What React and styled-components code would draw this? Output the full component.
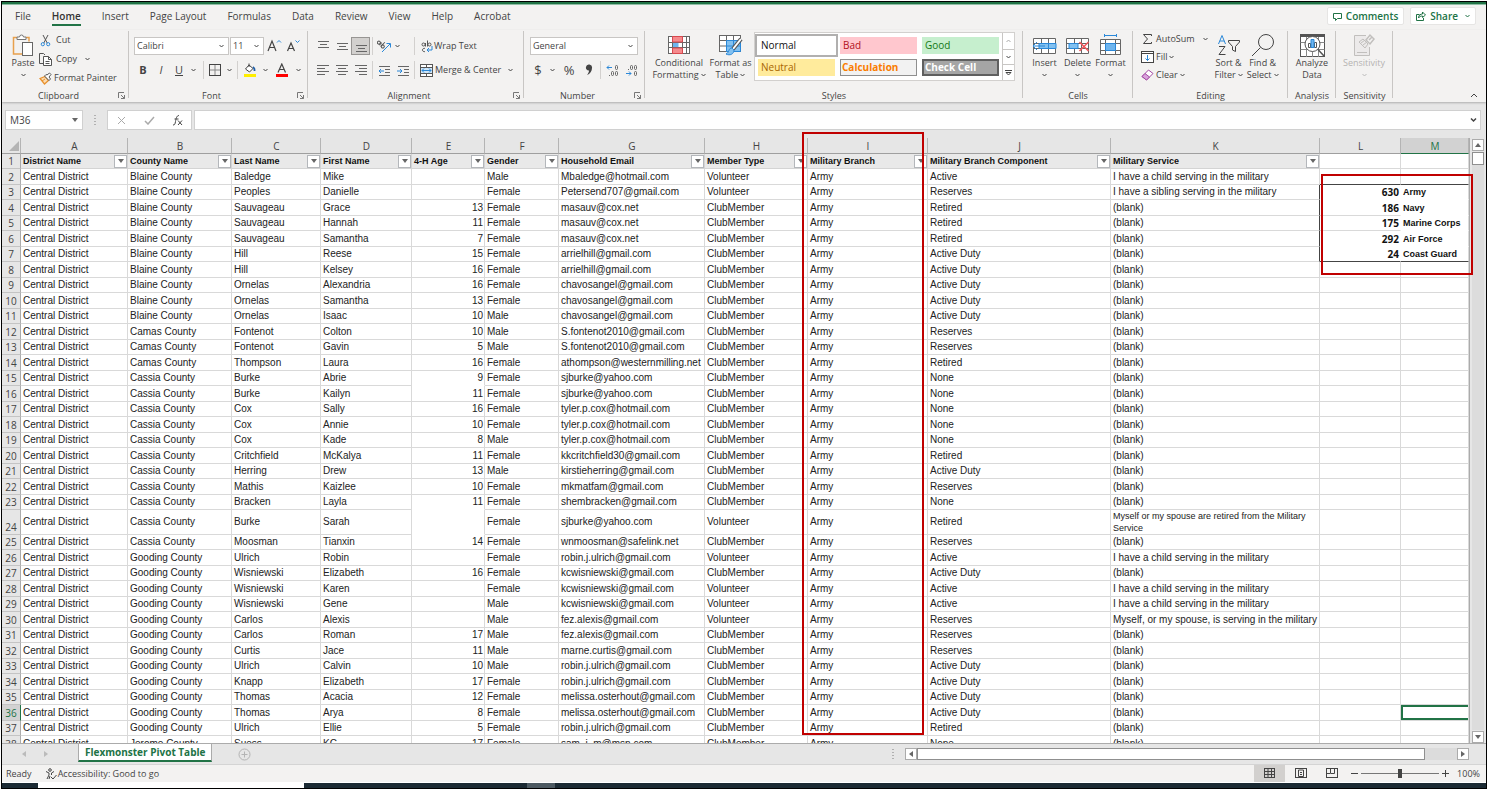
import React from "react";
import styled, { createGlobalStyle, css } from "styled-components";

const GREEN = "#217346";
const INK = "#444";
const BLUE = "#2b88d8";
const RED = "#c00000";

const GlobalStyle = createGlobalStyle`
  *, *::before, *::after { box-sizing: border-box; }
  body { margin: 0; background: #fff; color: ${INK}; font: 9px/12px "Open Sans", "Noto Sans", sans-serif; }
  button, select, input { font: inherit; color: inherit; margin: 0; padding: 0; border: 0; border-radius: 0; background: none; }
  svg { display: block; flex: none; }
`;

const Frame = styled.div`height: 100vh; padding: 1px;`;
const AppWindow = styled.div`
  height: 100%; display: flex; flex-direction: column; overflow: hidden;
  border: 1px solid #000; background: #f3f2f1;
`;
const TitleStrip = styled.div`flex: none; height: 3px; background: ${GREEN}; border-bottom: 1px solid #8fbfa5;`;

const MenuBar = styled.nav`
  flex: none; height: 25px; display: flex; align-items: center; gap: 1px;
  padding: 0 10px 3px 3px; font-size: 10px;
`;
const MenuTab = styled.button`
  height: 22px; padding: 0 10px; position: relative;
  ${p => p.$active && css`
    color: #333; font-weight: 600;
    &::after { content: ""; position: absolute; left: 10px; right: 10px; bottom: 1px; height: 2px; background: ${GREEN}; }
  `}
`;
const PillButton = styled.button`
  height: 18px; display: flex; align-items: center; gap: 4px; padding: 0 5px;
  background: #fff; border: 1px solid #e6e5e4; border-radius: 2px; color: ${GREEN}; font-weight: 600;
`;
const PillGroup = styled.div`margin-left: auto; display: flex; gap: 6px;`;

const Ribbon = styled.div`
  flex: none; height: 72px; display: flex; position: relative; z-index: 1;
  box-shadow: 0 1px 2px rgba(0,0,0,.25); background: #f3f2f1;
`;
const Group = styled.section`
  flex: none; width: ${p => p.$w}px; display: flex; flex-direction: column; position: relative;
  &::after { content: ""; position: absolute; right: 0; top: 1px; bottom: 4px; width: 1px; background: #c8c6c4; }
`;
const GroupBody = styled.div`height: 60px; display: flex; padding-left: ${p => p.$pad || 0}px;`;
const GroupLabel = styled.div`height: 12px; display: flex; align-items: center; text-align: center;`;
const GroupName = styled.span`flex: 1;`;
const Launcher = styled.button`width: 14px; height: 12px; display: grid; place-items: center;`;
const Stack = styled.div`display: flex; flex-direction: column; gap: ${p => p.$gap || 0}px; padding-top: ${p => p.$top || 0}px;`;
const Line = styled.div`display: flex; align-items: center; height: 20px;`;
const Tool = styled.button`
  width: ${p => p.$w || 19}px; height: 18px; display: flex; align-items: center; justify-content: center;
  font-size: ${p => p.$size || 11}px; font-weight: ${p => (p.$bold ? 700 : 400)};
  font-style: ${p => (p.$italic ? "italic" : "normal")}; text-decoration: ${p => (p.$under ? "underline" : "none")};
  ${p => p.$on && css`background: #d2d0ce; border: 1px solid #979593;`}
`;
const TextTool = styled.button`
  height: 18px; display: flex; align-items: center; gap: ${p => p.$gap || 2}px; white-space: nowrap;
`;
const ToolIcon = styled.span`width: 13px; display: grid; place-items: center;`;
const Trailing = styled.span`margin-left: ${p => p.$m || 0}px;`;
const Divider = styled.span`width: 1px; height: 18px; background: #d2d0ce;`;
const BigTool = styled.button`
  width: ${p => p.$w}px; padding-top: 3px; display: flex; flex-direction: column; align-items: center;
  color: ${p => (p.$off ? "#b5b3b1" : INK)}; white-space: nowrap;
`;
const BigIcon = styled.span`height: 24px; display: grid; place-items: center;`;
const BigText = styled.span`height: 12px; display: flex; align-items: center; gap: 2px;`;

const SelectBox = styled.label`
  position: relative; width: ${p => p.$w}px; height: 18px; margin-right: 1px;
  background: #fff; border: 1px solid #c8c6c4;
  select { appearance: none; width: 100%; height: 100%; padding-left: 2px; outline: 0; }
  svg { position: absolute; right: 4px; top: 6px; pointer-events: none; }
`;

const Gallery = styled.div`display: flex; height: 49px; margin-top: 2px; background: #fff; border: 1px solid #d2d0ce;`;
const StyleGrid = styled.div`display: grid; grid-template-columns: repeat(3, 77px); grid-auto-rows: 17px; gap: 5px; padding: 4px 3px;`;
const StyleChip = styled.button`
  text-align: left; padding-left: 3px; font-size: 10px; line-height: 13px; color: ${p => p.$fg}; background: ${p => p.$bg};
  font-weight: ${p => (p.$bold ? 700 : 400)};
  ${p => p.$line && css`border: ${p.$line}; padding-left: 1px;`}
  ${p => p.$picked && css`outline: 2px solid #b1b0af; outline-offset: 1px;`}
`;
const GalleryNav = styled.div`
  width: 12px; display: grid; grid-template-rows: repeat(3, 1fr); border-left: 1px solid #c8c6c4;
  button { display: grid; place-items: center; }
  button + button { border-top: 1px solid #c8c6c4; }
`;
const Collapse = styled.button`margin: auto 6px 2px auto; width: 12px; height: 10px; display: grid; place-items: center;`;

const FormulaBar = styled.div`
  flex: none; height: 29px; padding: 8px 5px 1px 3px; display: flex; align-items: stretch; background: #e6e6e6;
`;
const NameBox = styled.label`
  width: 78px; display: flex; align-items: center; background: #fff; border: 1px solid #d0d0d0; padding: 0 4px;
  input { width: 100%; font-size: 10px; outline: 0; }
`;
const Grip = styled.span`width: 24px; display: grid; place-items: center;`;
const FxBox = styled.div`width: 85px; margin-right: 2px; display: flex; background: #fff; border: 1px solid #d0d0d0;`;
const FxButton = styled.button`flex: 1; display: grid; place-items: center;`;
const FormulaField = styled.label`
  flex: 1; display: flex; align-items: center; background: #fff; border: 1px solid #d0d0d0; padding-right: 3px;
  input { flex: 1; outline: 0; }
`;

const SheetArea = styled.main`flex: 1; min-height: 0; display: flex; position: relative; padding-top: 7px; background: #e6e6e6;`;
const TableClip = styled.div`flex: 1; min-width: 0; overflow: hidden; border-right: 1px solid #ababab;`;
const Grid = styled.table`
  width: 100%; table-layout: fixed; border-collapse: separate; border-spacing: 0; background: #fff;
  font: 10px/12px "Liberation Sans", Arial, sans-serif; color: #222;
  td, th { padding: 0 1px 0 2px; overflow: hidden; white-space: nowrap; }
`;
const CornerCell = styled.td`background: #e6e6e6; border-right: 1px solid #b4b4b4; border-bottom: 1px solid #9f9f9f; svg { margin: 0 0 0 auto; }`;
const ColHead = styled.th`
  height: 16px; font: 10px/14px "Open Sans", sans-serif; color: ${p => (p.$on ? GREEN : INK)};
  background: ${p => (p.$on ? "#d2d2d2" : "#e6e6e6")}; border-right: 1px solid #b4b4b4;
  border-bottom: 1px solid ${p => (p.$on ? GREEN : "#9f9f9f")};
`;
const Row = styled.tr`height: ${p => p.$h}px;`;
const RowHead = styled.th`
  && { padding: 0; }
  font: 10px/14px "Open Sans", sans-serif; text-align: center; vertical-align: ${p => (p.$low ? "bottom" : "middle")};
  color: ${p => (p.$on ? GREEN : INK)}; background: ${p => (p.$on ? "#d2d2d2" : "#e6e6e6")};
  border-right: 1px solid ${p => (p.$on ? GREEN : "#ababab")}; border-bottom: 1px solid #c4c4c4;
`;
const FieldHead = styled.td`
  && { padding-right: 0; }
  background: #e9e9e9; border-right: 1px solid #d4d4d4; border-bottom: 1px solid #d4d4d4;
  font-size: 9px; font-weight: 700; color: #111;
`;
const FieldInner = styled.div`display: flex; align-items: center; justify-content: space-between; height: 14px;`;
const FilterButton = styled.button`
  flex: none; width: 13px; height: 13px; display: grid; place-items: center; background: #fff; border: 1px solid #b4b7bb;
`;
const Cell = styled.td`
  text-align: ${p => (p.$right ? "right" : "left")};
  border-right: 1px solid ${p => (p.$edge === "dark" ? "#444" : p.$edge === "none" ? "transparent" : "#d9d9d9")};
  border-bottom: 1px solid ${p => (p.$base === "dark" ? "#444" : p.$base === "none" ? "transparent" : "#d9d9d9")};
  ${p => p.$wrap && css`&& { white-space: normal; font-size: 9px; }`}
  ${p => p.$tally && css`font-weight: 700; font-size: ${p.$right ? 10 : 9}px; color: #111;`}
  ${p => p.$tally && p.$right && css`font-family: "Open Sans", sans-serif;`}
  ${p => p.$picked && css`box-shadow: inset 2px 2px 0 ${GREEN}, inset 0 -2px 0 ${GREEN};`}
`;
const Callout = styled.div`
  position: absolute; pointer-events: none; border: 2px solid ${RED};
  left: ${p => p.$x}px; top: ${p => p.$y}px; width: ${p => p.$w}px; height: ${p => p.$h}px;
`;

const VScroll = styled.div`flex: none; width: 16px; padding: 1px 2px 0 2px; display: flex; flex-direction: column; gap: 1px;`;
const ScrollButton = styled.button`flex: none; width: 12px; height: 12px; display: grid; place-items: center; background: #fff; border: 1px solid #ababab;`;
const VTrack = styled.div`flex: 1; background: #dcdcdc;`;
const VThumb = styled.div`height: 13px; background: #fff; border: 1px solid #8f8f8f;`;

const TabStrip = styled.div`
  flex: none; height: 22px; display: flex; background: #e6e6e6; border-top: 1px solid #ababab; border-bottom: 1px solid #d4d4d4;
  padding-right: 17px;
`;
const TabArrows = styled.div`width: 76px; display: flex; justify-content: center; gap: 16px; padding-right: 10px; button { display: grid; place-items: center; }`;
const SheetTab = styled.button`
  height: 18px; padding: 0 6px; background: #fff; color: ${GREEN}; font-size: 10px; font-weight: 700; white-space: nowrap;
  border: 1px solid #ababab; border-top: 0; border-bottom: 2px solid ${GREEN};
`;
const AddSheet = styled.button`width: 64px; height: 20px; display: grid; place-items: center;`;
const HScroll = styled.div`margin-left: auto; width: 588px; display: flex; align-items: center;`;
const HTrack = styled.div`flex: 1; height: 12px; background: #dcdcdc;`;
const HThumb = styled.div`width: 94%; height: 12px; background: #fff; border: 1px solid #8f8f8f;`;

const StatusBar = styled.footer`flex: none; height: 17px; display: flex; align-items: center; padding: 0 6px 0 4px; background: #f3f2f1;`;
const A11yStatus = styled.button`display: flex; align-items: center; gap: 1px; margin-left: 13px;`;
const ViewButtons = styled.div`margin-left: auto; display: flex; height: 17px;`;
const ViewButton = styled.button`width: 31px; display: grid; place-items: center; background: ${p => (p.$on ? "#d2d0ce" : "none")};`;
const ZoomBar = styled.div`display: flex; align-items: center; margin-left: 1px;`;
const ZoomStep = styled.button`width: 13px; height: 14px; display: grid; place-items: center;`;
const ZoomRange = styled.input`
  appearance: none; width: 78px; height: 10px;
  &::-webkit-slider-runnable-track { height: 9px; background: linear-gradient(#777, #777) center / 100% 1px no-repeat; }
  &::-webkit-slider-thumb { appearance: none; width: 4px; height: 9px; background: #444; }
`;
const ZoomValue = styled.span`width: 28px; text-align: right;`;
const Taskbar = styled.div`flex: none; height: 6px; display: flex; background: #1b2a33; border-top: 1px solid #fff;`;
const TaskSearch = styled.div`width: 266px; margin-left: 36px; background: #fff;`;
const TaskApp = styled.div`width: 28px; margin-left: 223px; background: #4d5a62;`;

const Svg = ({ w = 14, h = 14, children, ...rest }) => (
  <svg width={w} height={h} viewBox={`0 0 ${w} ${h}`} fill="none" stroke={INK} aria-hidden="true" {...rest}>{children}</svg>
);
const Chevron = ({ up, color = INK }) => (
  <Svg w={5} h={4} stroke={color}><path d={up ? "M.5 3l2-2 2 2" : "M.5 1l2 2 2-2"} /></Svg>
);
const Triangle = ({ dir = "down", color = "#666" }) => {
  const d = { down: "M0 1h6L3 5z", up: "M0 5h6L3 1z", left: "M5 0v6L1 3z", right: "M1 0v6l4-3z" }[dir];
  return <Svg w={6} h={6} stroke="none"><path d={d} fill={color} /></Svg>;
};
const DotsIcon = () => <Svg w={2} h={10} stroke="none" fill="#b0b0b0"><path d="M0 0h2v1H0zM0 3h2v1H0zM0 6h2v1H0zM0 9h2v1H0z" /></Svg>;
const LaunchIcon = () => <Svg w={8} h={8} stroke="#777"><path d="M.5 6V.5H6M3 3l3.500 3.500M6.500 3v3.500H3" /></Svg>;
const lines = (a, y0 = 2) => a.map((s, i) => <path key={i} d={`M${s[0]} ${y0 + i * 3 + 0.5}h${s[1]}`} />);
const LinesIcon = ({ rows, y }) => <Svg w={12} h={13} stroke="#666">{lines(rows, y)}</Svg>;

const PasteIcon = () => (
  <Svg w={24} h={24}>
    <path d="M6 4.500H2.500v16.500H11M15 4.500h3v4" stroke="#e8a04c" strokeWidth="1.500" />
    <path d="M6 6.500V4h2.500a2 2 0 0 1 4 0H15v2.500z" fill="#fff" stroke="#777" />
    <rect x="11.500" y="9.500" width="10" height="13" fill="#fff" stroke="#666" />
  </Svg>
);
const CutIcon = () => (
  <Svg w={11} h={13}><path d="M3 1l4.200 8M8 1L3.800 9" stroke="#555" /><circle cx="2.800" cy="10.200" r="1.600" stroke={BLUE} /><circle cx="8.200" cy="10.200" r="1.600" stroke={BLUE} /></Svg>
);
const CopyIcon = () => (
  <Svg w={13} h={13} stroke="#555"><path d="M4 10.500H.5V.5h4l1.500 1.500" /><path d="M4.500 3.500h5l3 3v6h-8z" fill="#fff" /><path d="M9.500 3.500v3h3M6.500 8.500h4M6.500 10.500h4" /></Svg>
);
const BrushIcon = () => (
  <Svg w={13} h={13}><path d="M1 6.500l5-2 3.500 4L5.500 12z" fill="#fbdcb2" stroke="#e8912d" strokeWidth="1.300" /><path d="M3 9l3-2" stroke="#e8912d" /><path d="M5.500 4l4.500 4.500 1.500-1.500-1.500-2 2-2.500-1.500-1.500L8 3 7 2.500z" fill="#fff" stroke="#555" /></Svg>
);
const GrowIcon = ({ shrink }) => (
  <Svg w={15} h={14}>
    <path d={shrink ? "M1.500 12L5 4l3.500 8M3 9.500h4" : "M1 12L5 2l4 10M2.500 8.500h5"} strokeWidth="1.200" />
    <path d={shrink ? "M9.500 1.500l2 2 2-2" : "M10 3.500l2-2 2 2"} stroke={BLUE} />
  </Svg>
);
const BorderIcon = () => <Svg w={13} h={13}><rect x=".5" y=".5" width="11" height="11" /><path d="M6 1v10M1 6h10" stroke="#888" /></Svg>;
const FillIcon = () => (
  <Svg w={14} h={14}><path d="M2.500 6L6 2l4 3.500L6.500 9z" fill="#fff" /><path d="M6 4V.5" /><path d="M10 4c2 1 1.500 3 1.500 4" stroke="#1f5fa8" strokeWidth="1.800" /><path d="M1 12.500h12" stroke="#ffee00" strokeWidth="3" /></Svg>
);
const FontColorIcon = () => <Svg w={14} h={14}><path d="M3 9.500L6.800 1l3.700 8.500M4.500 6.500h4.700" strokeWidth="1.200" /><path d="M1 12.500h12" stroke="red" strokeWidth="3" /></Svg>;
const OrientIcon = () => (
  <Svg w={15} h={13}><g transform="rotate(45 4 4)" stroke="#555"><circle cx="1.500" cy="4.500" r="1.500" /><path d="M3.500 2.500V6M5.500 0v6" /><circle cx="7" cy="4.500" r="1.500" /></g><path d="M5 12l8-8M9.500 3.500h4v4" stroke={BLUE} /></Svg>
);
const IndentIcon = ({ out }) => (
  <Svg w={13} h={13} stroke="#666"><path d="M1 2.500h11M7 5.500h5M7 8.500h5M1 11.500h11" /><path d={out ? "M6 7H1M3 5L1 7l2 2" : "M0 7h5M3 5l2 2-2 2"} stroke={BLUE} /></Svg>
);
const WrapIcon = () => (
  <Svg w={12} h={13} stroke="#555"><circle cx="2.500" cy="4.500" r="1.500" /><path d="M4.500 3v3.500M6.500.5v6" /><circle cx="8.500" cy="4.500" r="1.500" /><path d="M4 8.500a1.700 1.700 0 1 0 0 3" /><path d="M11 6v4H6M8 8l-2 2 2 2" stroke={BLUE} /></Svg>
);
const MergeIcon = () => (
  <Svg w={13} h={13} stroke="#555"><rect x=".5" y=".5" width="12" height="12" fill="#fff" /><path d="M1 3.500h11v6H1z" fill="#cfe6f8" stroke="none" /><path d="M6.500 1v2M6.500 10v2M.5 3.500h12M.5 9.500h12" /><path d="M2 6.500h9M4 4.500l-2 2 2 2M9 4.500l2 2-2 2" stroke={BLUE} /></Svg>
);
const DecimalIcon = ({ less }) => (
  <Svg w={14} h={13} stroke="#666">
    <path d={less ? "M1 9.500h5M4 7.500l2 2-2 2" : "M6 3.500H1M3 1.500l-2 2 2 2"} stroke={BLUE} />
    {less
      ? <><path d="M3 5.500h1" /><rect x="5.500" y="1.500" width="2" height="4" rx="1" /><rect x="9.500" y="1.500" width="2" height="4" rx="1" /><rect x="9.500" y="7.500" width="2" height="4" rx="1" /></>
      : <><rect x="9.500" y="1.500" width="2" height="4" rx="1" /><path d="M3 11.500h1" /><rect x="5.500" y="7.500" width="2" height="4" rx="1" /><rect x="9.500" y="7.500" width="2" height="4" rx="1" /></>}
  </Svg>
);
const CondIcon = () => (
  <Svg w={23} h={19} stroke="#666">
    <rect x=".5" y=".5" width="21" height="17" fill="#fff" /><path d="M.5 6.500h21M.5 11.500h21M4.500 1v17M14.500 1v17M18.500 1v17" />
    <path d="M4.500 .5h10v5.500h-10zM4.500 12h10v5.500h-10z" fill="#f58a8d" stroke="#d9484e" /><path d="M5 7h5.500v4H5z" fill="#6fb5ee" stroke="none" />
  </Svg>
);
const TableIcon = () => (
  <Svg w={24} h={23} stroke="#666">
    <rect x=".5" y="1.500" width="21" height="16" fill="#fff" /><path d="M.5 6.500h21M.5 12h21M7.500 1v16M14.500 1v16" />
    <path d="M7.500 6.500h14v11h-14z" fill="#83c1f0" stroke={BLUE} /><path d="M7.500 12h14M14.500 7v10" stroke={BLUE} />
    <path d="M22 5L14 15" strokeWidth="4" stroke="#555" /><path d="M22 5L14 15" stroke="#fff" strokeWidth="2" /><path d="M13 14c-4 0-2 4-6 6 4 2 8 0 8-4z" fill="#83c1f0" stroke={BLUE} />
  </Svg>
);
const CellsIcon = ({ kind }) => (
  <Svg w={25} h={24} stroke="#666">
    <path d={kind === "format" ? "M2.500 6.500h20v15h-20z" : "M1.500 5.500h22v15h-22z"} fill="#fff" />
    {kind === "insert" && <><path d="M2 10.500h21M2 15.500h21M9.500 5v15M16.500 5v15" /><path d="M7 10.500h17v5H7z" fill="#83c1f0" stroke={BLUE} /><path d="M16.500 11v4" stroke={BLUE} /><path d="M13 13H1M5 9l-4 4 4 4" stroke={BLUE} /></>}
    {kind === "delete" && <><path d="M2 10.500h21M2 15.500h21M9.500 5v15M16.500 5v15" /><path d="M4 10.500h9v5H4z" fill="#83c1f0" stroke={BLUE} /><path d="M14.500 9l9 9M23.500 9l-9 9" stroke="#f2565b" strokeWidth="1.500" /></>}
    {kind === "format" && <><path d="M2.500 10.500h20M2.500 17.500h20M7.500 6.500v15M17.500 6.500v15" /><path d="M7.500 10.500h10v7h-10z" fill="#6fb5ee" stroke={BLUE} /><path d="M6 2.500h13M6.500 1v3M18.500 1v3" stroke={BLUE} /></>}
  </Svg>
);
const SumIcon = () => <Svg w={11} h={12}><path d="M9.500 3V1.500H1.500l4 4.500-4 4.500h8V9" /></Svg>;
const FillDownIcon = () => <Svg w={13} h={12}><rect x=".5" y=".5" width="12" height="11" fill="#fff" /><path d="M.5 2.500h12" /><path d="M6.500 4v5.500M4.500 7.500l2 2 2-2" stroke={BLUE} /></Svg>;
const EraserIcon = () => <Svg w={13} h={12}><path d="M1 7.500L7.500 1 12 4.500 5.500 11z" fill="#fff" stroke="#a349a4" /><path d="M1 7.500l3-3 4.500 3.500-3 3z" fill="#d9a3dc" stroke="#a349a4" /></Svg>;
const SortIcon = () => (
  <Svg w={24} h={24}><path d="M1.500 11L5 2.500 8.500 11M2.800 8h4.400" stroke={BLUE} /><path d="M2 13.500h6l-6 8h6.500" /><path d="M11.500 7.500h11v1.500l-4 4.500v5l-3-1.500v-3.500l-4-4.500z" /></Svg>
);
const FindIcon = () => <Svg w={24} h={24}><circle cx="15" cy="9" r="7.500" /><path d="M9.500 14.500L1 23" /></Svg>;
const AnalyzeIcon = () => (
  <Svg w={25} h={25} stroke="#555">
    <rect x=".5" y="1.500" width="24" height="22" fill="#fff" /><path d="M.5 2.500h24" strokeWidth="3" /><path d="M.5 9.500h24M.5 16.500h24M6.500 4v20M12.500 16v8M18.500 4v20" stroke="#888" />
    <circle cx="12.500" cy="11" r="7.500" fill="#fff" /><path d="M8.500 10.500h2v4h-2zM14.500 9.500h2v5h-2z" fill="#fff" /><path d="M11 6.500h3v8h-3z" fill="#6fb5ee" stroke={BLUE} /><path d="M18 16.500l6 6.500" strokeWidth="1.500" />
  </Svg>
);
const SensitivityIcon = () => (
  <Svg w={23} h={24} stroke="#c1bfbd"><path d="M13 2.500H1.500v20h15V14" fill="#eceaea" /><path d="M6 9l4-3 5 5-3 4-6-6zM8 10l4-3M10 12l4-3" /><path d="M13 7l4-5 4 4-4 5zM16 7l3-3" strokeWidth="1.500" /><path d="M4 19.500h10" /></Svg>
);
const CommentIcon = () => <Svg w={9} h={9} stroke={GREEN}><path d="M.5 1.500h8v5h-4l-2 2v-2h-2z" /></Svg>;
const ShareIcon = () => <Svg w={10} h={10} stroke={GREEN}><path d="M3.500 3.500h-3v6h7V7M2.500 7c0-3 2-4 4-4V1l3 3-3 2.500V5c-2 0-3 .5-4 2z" /></Svg>;

const DropText = ({ children }) => <BigText>{children}<Chevron /></BigText>;
const Launch = ({ name }) => <GroupLabel><GroupName>{name}</GroupName><Launcher aria-label={`${name} settings`}><LaunchIcon /></Launcher></GroupLabel>;
const Picker = ({ w, value, label }) => (
  <SelectBox $w={w}><select aria-label={label} defaultValue={value}><option>{value}</option></select><Chevron /></SelectBox>
);
const DropArrow = ({ w = 14, label }) => <Tool $w={w} aria-label={label}><Chevron /></Tool>;

const menu = ["File", "Home", "Insert", "Page Layout", "Formulas", "Data", "Review", "View", "Help", "Acrobat"];
const chips = [
  { name: "Normal", fg: "#111", bg: "#fff", picked: true },
  { name: "Bad", fg: "#b3101c", bg: "#ffc7ce" },
  { name: "Good", fg: "#157a15", bg: "#c6efce" },
  { name: "Neutral", fg: "#a86500", bg: "#ffeb9c" },
  { name: "Calculation", fg: "#fa7d00", bg: "#f2f2f2", bold: true, line: "1px solid #8f8f8f" },
  { name: "Check Cell", fg: "#fff", bg: "#a5a5a5", bold: true, line: "2px solid #5f5f5f" },
];

const columns = [
  ["A", 107, "District Name"], ["B", 104, "County Name"], ["C", 89, "Last Name"], ["D", 91, "First Name"],
  ["E", 73, "4-H Age"], ["F", 74, "Gender"], ["G", 146, "Household Email"], ["H", 103, "Member Type"],
  ["I", 120, "Military Branch"], ["J", 183, "Military Branch Component"], ["K", 209, "Military Service"], ["L", 81, ""], ["M", null, ""],
];
const CHILD = "I have a child serving in the military";
// County | last name | first name | age | gender | email | component | service; members without an age are volunteers.
const people = `Blaine|Baledge|Mike||Male|Mbaledge@hotmail.com|Active|${CHILD}
Blaine|Peoples|Danielle||Female|Petersend707@gmail.com|Reserves|I have a sibling serving in the military
Blaine|Sauvageau|Grace|13|Female|masauv@cox.net|Retired
Blaine|Sauvageau|Hannah|11|Female|masauv@cox.net|Retired
Blaine|Sauvageau|Samantha|7|Female|masauv@cox.net|Retired
Blaine|Hill|Reese|15|Female|arrielhill@gmail.com|Active Duty
Blaine|Hill|Kelsey|16|Female|arrielhill@gmail.com|Active Duty
Blaine|Ornelas|Alexandria|16|Female|chavosangel@gmail.com|Active Duty
Blaine|Ornelas|Samantha|13|Female|chavosangel@gmail.com|Active Duty
Blaine|Ornelas|Isaac|10|Male|chavosangel@gmail.com|Active Duty
Camas|Fontenot|Colton|10|Male|S.fontenot2010@gmail.com|Reserves
Camas|Fontenot|Gavin|5|Male|S.fontenot2010@gmail.com|Reserves
Camas|Thompson|Laura|16|Female|athompson@westernmilling.net|Retired
Cassia|Burke|Abrie|9|Female|sjburke@yahoo.com|None
Cassia|Burke|Kailyn|11|Female|sjburke@yahoo.com|None
Cassia|Cox|Sally|16|Female|tyler.p.cox@hotmail.com|None
Cassia|Cox|Annie|10|Female|tyler.p.cox@hotmail.com|None
Cassia|Cox|Kade|8|Male|tyler.p.cox@hotmail.com|None
Cassia|Critchfield|McKalya|11|Female|kkcritchfield30@gmail.com|Retired
Cassia|Herring|Drew|13|Male|kirstieherring@gmail.com|Active Duty
Cassia|Mathis|Kaizlee|10|Female|mkmatfam@gmail.com|Reserves
Cassia|Bracken|Layla|11|Female|shembracken@gmail.com|None
Cassia|Burke|Sarah||Female|sjburke@yahoo.com|Retired|Myself or my spouse are retired from the Military Service
Cassia|Moosman|Tianxin|14|Female|wnmoosman@safelink.net|Reserves
Gooding|Ulrich|Robin||Female|robin.j.ulrich@gmail.com|Active|${CHILD}
Gooding|Wisniewski|Elizabeth|16|Female|kcwisniewski@gmail.com|Active Duty
Gooding|Wisniewski|Karen||Female|kcwisniewski@gmail.com|Active|${CHILD}
Gooding|Wisniewski|Gene||Male|kcwisniewski@gmail.com|Active|${CHILD}
Gooding|Carlos|Alexis||Male|fez.alexis@gmail.com|Reserves|Myself, or my spouse, is serving in the military
Gooding|Carlos|Roman|17|Male|fez.alexis@gmail.com|Reserves
Gooding|Curtis|Jace|11|Male|marne.curtis@gmail.com|Reserves
Gooding|Ulrich|Calvin|10|Male|robin.j.ulrich@gmail.com|Active Duty
Gooding|Knapp|Elizabeth|17|Female|robin.j.ulrich@gmail.com|Active Duty
Gooding|Thomas|Acacia|12|Female|melissa.osterhout@gmail.com|Active Duty
Gooding|Thomas|Arya|8|Female|melissa.osterhout@gmail.com|Active Duty
Gooding|Ulrich|Ellie|5|Female|robin.j.ulrich@gmail.com|Retired
Jerome|Suess|KC|17|Female|sam_j_m@msn.com|None`.split("\n").map(r => r.split("|"));

const tally = { 3: [630, "Army"], 4: [186, "Navy"], 5: [175, "Marine Corps"], 6: [292, "Air Force"], 7: [24, "Coast Guard"] };
const noAgeLine = [15, 23, 24];

function DataRow({ n, rec }) {
  const [county, last, first, age, gender, email, part, service = "(blank)"] = rec;
  const t = tally[n];
  const base = n === 2 || n === 7 ? "dark" : undefined;
  return (
    <Row $h={n === 24 ? 24 : n % 2 ? 15 : 16}>
      <RowHead scope="row" $on={n === 36} $low={n === 24}>{n}</RowHead>
      <Cell>Central District</Cell>
      <Cell>{county} County</Cell>
      <Cell>{last}</Cell>
      <Cell>{first}</Cell>
      <Cell $right $base={noAgeLine.includes(n) ? "none" : undefined}>{age}</Cell>
      <Cell>{gender}</Cell>
      <Cell>{email}</Cell>
      <Cell>{age ? "ClubMember" : "Volunteer"}</Cell>
      <Cell>Army</Cell>
      <Cell>{part}</Cell>
      <Cell $wrap={n === 24} $edge={t ? "dark" : undefined}>{service}</Cell>
      <Cell $right $tally={!!t} $edge={t ? "none" : undefined} $base={base || (n === 3 || n === 6 ? "none" : undefined)}>{t && t[0]}</Cell>
      <Cell $tally={!!t} $picked={n === 36} $base={base || (t ? "none" : undefined)}>{t && t[1]}</Cell>
    </Row>
  );
}

function RibbonBar() {
  return (
    <Ribbon>
      <Group $w={127}>
        <GroupBody $pad={5}>
          <BigTool $w={32}><BigIcon><PasteIcon /></BigIcon><BigText>Paste</BigText><BigText><Chevron /></BigText></BigTool>
          <Stack $top={1} $gap={1}>
            <TextTool $gap={4}><ToolIcon><CutIcon /></ToolIcon>Cut</TextTool>
            <TextTool $gap={4}><ToolIcon><CopyIcon /></ToolIcon>Copy<Trailing $m={4}><Chevron /></Trailing></TextTool>
            <TextTool><ToolIcon><BrushIcon /></ToolIcon>Format Painter</TextTool>
          </Stack>
        </GroupBody>
        <Launch name="Clipboard" />
      </Group>
      <Group $w={179}>
        <GroupBody $pad={5}>
          <Stack $top={6} $gap={4}>
            <Line>
              <Picker w={95} value="Calibri" label="Font" /><Picker w={34} value="11" label="Font size" />
              <Tool aria-label="Grow font"><GrowIcon /></Tool><Tool aria-label="Shrink font"><GrowIcon shrink /></Tool>
            </Line>
            <Line>
              <Tool $w={18} $bold>B</Tool><Tool $w={18} $italic>I</Tool><Tool $w={18} $under>U</Tool><DropArrow w={10} label="Underline styles" />
              <Trailing $m={5} /><Divider />
              <Tool $w={22} aria-label="Borders"><BorderIcon /></Tool><DropArrow w={6} label="Border styles" />
              <Trailing $m={5} /><Divider />
              <Tool $w={24} aria-label="Fill color"><FillIcon /></Tool><DropArrow w={6} label="Fill colors" />
              <Tool $w={27} aria-label="Font color"><FontColorIcon /></Tool><DropArrow w={6} label="Font colors" />
            </Line>
          </Stack>
        </GroupBody>
        <Launch name="Font" />
      </Group>
      <Group $w={216}>
        <GroupBody $pad={5}>
          <Stack $top={6} $gap={4}>
            <Line>
              <Tool aria-label="Top align"><LinesIcon rows={[[1, 11], [3, 7], [1, 11]]} y={1} /></Tool>
              <Tool aria-label="Middle align"><LinesIcon rows={[[1, 11], [3, 7], [1, 11]]} y={3} /></Tool>
              <Tool $on aria-label="Bottom align"><LinesIcon rows={[[1, 11], [3, 7], [1, 11]]} y={5} /></Tool>
              <Trailing $m={2} /><Divider />
              <Trailing $m={2} /><Tool aria-label="Orientation"><OrientIcon /></Tool><DropArrow w={6} label="Orientation options" />
              <Trailing $m={14} /><Divider /><Trailing $m={6} />
              <TextTool $gap={1}><WrapIcon />Wrap Text</TextTool>
            </Line>
            <Line>
              <Tool aria-label="Align left"><LinesIcon rows={[[0, 12], [0, 8], [0, 12], [0, 8]]} y={1} /></Tool>
              <Tool aria-label="Center"><LinesIcon rows={[[0, 12], [2, 8], [0, 12], [2, 8]]} y={1} /></Tool>
              <Tool aria-label="Align right"><LinesIcon rows={[[0, 12], [4, 8], [0, 12], [4, 8]]} y={1} /></Tool>
              <Trailing $m={2} /><Divider /><Trailing $m={2} />
              <Tool aria-label="Decrease indent"><IndentIcon out /></Tool><Tool aria-label="Increase indent"><IndentIcon /></Tool>
              <Trailing $m={1} /><Divider /><Trailing $m={5} />
              <TextTool><MergeIcon />Merge &amp; Center<Trailing $m={5}><Chevron /></Trailing></TextTool>
            </Line>
          </Stack>
        </GroupBody>
        <Launch name="Alignment" />
      </Group>
      <Group $w={121}>
        <GroupBody $pad={6}>
          <Stack $top={6} $gap={4}>
            <Line><Picker w={108} value="General" label="Number format" /></Line>
            <Line>
              <Tool $w={16} $size={13}>$</Tool><DropArrow w={13} label="Currency" /><Tool $w={20} $size={13}>%</Tool>
              <Tool aria-label="Comma style"><Svg w={8} h={12} stroke="none"><path d="M1 3a2.800 2.800 0 1 1 6 1C7 7 5 10 2 11c1.500-2 2-3 2-4.500A2.800 2.800 0 0 1 1 3z" fill={INK} /></Svg></Tool>
              <Trailing $m={2} /><Divider /><Trailing $m={2} />
              <Tool aria-label="Increase decimal"><DecimalIcon /></Tool><Tool aria-label="Decrease decimal"><DecimalIcon less /></Tool>
            </Line>
          </Stack>
        </GroupBody>
        <Launch name="Number" />
      </Group>
      <Group $w={378}>
        <GroupBody $pad={6}>
          <BigTool $w={56}><BigIcon><CondIcon /></BigIcon><BigText>Conditional</BigText><DropText>Formatting</DropText></BigTool>
          <BigTool $w={47}><BigIcon><TableIcon /></BigIcon><BigText>Format as</BigText><DropText>Table</DropText></BigTool>
          <Gallery>
            <StyleGrid>
              {chips.map(c => <StyleChip key={c.name} $fg={c.fg} $bg={c.bg} $bold={c.bold} $line={c.line} $picked={c.picked}>{c.name}</StyleChip>)}
            </StyleGrid>
            <GalleryNav>
              <button aria-label="Previous styles"><Chevron up color="#aaa" /></button>
              <button aria-label="Next styles"><Chevron /></button>
              <button aria-label="More styles"><Svg w={7} h={7}><path d="M0 1.500h7M1 3.500l2.500 2.500L6 3.500z" /></Svg></button>
            </GalleryNav>
          </Gallery>
        </GroupBody>
        <GroupLabel><GroupName>Styles</GroupName></GroupLabel>
      </Group>
      <Group $w={110}>
        <GroupBody $pad={5}>
          {["Insert", "Delete", "Format"].map(k => (
            <BigTool key={k} $w={33}><BigIcon><CellsIcon kind={k.toLowerCase()} /></BigIcon><BigText>{k}</BigText><BigText><Chevron /></BigText></BigTool>
          ))}
        </GroupBody>
        <GroupLabel><GroupName>Cells</GroupName></GroupLabel>
      </Group>
      <Group $w={155}>
        <GroupBody $pad={8}>
          <Stack>
            <TextTool><ToolIcon><SumIcon /></ToolIcon>AutoSum<Trailing $m={6}><Chevron /></Trailing></TextTool>
            <TextTool><ToolIcon><FillDownIcon /></ToolIcon>Fill<Chevron /></TextTool>
            <TextTool><ToolIcon><EraserIcon /></ToolIcon>Clear<Chevron /></TextTool>
          </Stack>
          <Trailing $m={4} />
          <BigTool $w={34}><BigIcon><SortIcon /></BigIcon><BigText>Sort &amp;</BigText><DropText>Filter</DropText></BigTool>
          <BigTool $w={34}><BigIcon><FindIcon /></BigIcon><BigText>Find &amp;</BigText><DropText>Select</DropText></BigTool>
        </GroupBody>
        <GroupLabel><GroupName>Editing</GroupName></GroupLabel>
      </Group>
      <Group $w={48}>
        <GroupBody><BigTool $w={48}><BigIcon><AnalyzeIcon /></BigIcon><BigText>Analyze</BigText><BigText>Data</BigText></BigTool></GroupBody>
        <GroupLabel><GroupName>Analysis</GroupName></GroupLabel>
      </Group>
      <Group $w={57}>
        <GroupBody><BigTool $w={56} $off><BigIcon><SensitivityIcon /></BigIcon><BigText>Sensitivity</BigText><BigText><Chevron color="#bbb" /></BigText></BigTool></GroupBody>
        <GroupLabel><GroupName>Sensitivity</GroupName></GroupLabel>
      </Group>
      <Collapse aria-label="Collapse ribbon"><Svg w={8} h={5}><path d="M1 4l3-3 3 3" /></Svg></Collapse>
    </Ribbon>
  );
}

export default function App() {
  return (
    <Frame>
      <GlobalStyle />
      <AppWindow>
        <TitleStrip />
        <MenuBar>
          {menu.map(m => <MenuTab key={m} $active={m === "Home"}>{m}</MenuTab>)}
          <PillGroup>
            <PillButton><CommentIcon />Comments</PillButton>
            <PillButton><ShareIcon />Share<Trailing $m={3}><Chevron color={GREEN} /></Trailing></PillButton>
          </PillGroup>
        </MenuBar>
        <RibbonBar />
        <FormulaBar>
          <NameBox><input aria-label="Name box" defaultValue="M36" /><Triangle /></NameBox>
          <Grip><DotsIcon /></Grip>
          <FxBox>
            <FxButton aria-label="Cancel"><Svg w={9} h={9} stroke="#aaa"><path d="M1 1l7 7M8 1L1 8" /></Svg></FxButton>
            <FxButton aria-label="Enter"><Svg w={11} h={9} stroke="#aaa" strokeWidth="1.500"><path d="M1 5l3 3 6-7" /></Svg></FxButton>
            <FxButton aria-label="Insert function"><Svg w={11} h={12}><path d="M1 11c2 0 2-1 2.500-3.500S4.500 1.500 7 1.500M2.500 5h4M6 6.500l4 4.500M10 6.500L6 11" /></Svg></FxButton>
          </FxBox>
          <FormulaField><input aria-label="Formula" /><Svg w={7} h={6}><path d="M1 1.500l2.500 2.500L6 1.500" strokeWidth="1.500" /></Svg></FormulaField>
        </FormulaBar>
        <SheetArea>
          <TableClip>
            <Grid>
              <colgroup>
                <col width="19" />
                {columns.map(([id, w]) => <col key={id} width={w || undefined} />)}
              </colgroup>
              <thead>
                <tr>
                  <CornerCell><Svg w={10} h={10} stroke="none"><path d="M10 0v10H0z" fill="#b4b4b4" /></Svg></CornerCell>
                  {columns.map(([id]) => <ColHead key={id} scope="col" $on={id === "M"}>{id}</ColHead>)}
                </tr>
              </thead>
              <tbody>
                <Row $h={15}>
                  <RowHead scope="row">1</RowHead>
                  {columns.map(([id, , title]) => title
                    ? <FieldHead key={id}><FieldInner>{title}<FilterButton aria-label={`Filter ${title}`}><Triangle /></FilterButton></FieldInner></FieldHead>
                    : <Cell key={id} />)}
                </Row>
                {people.map((rec, i) => <DataRow key={i} n={i + 2} rec={rec} />)}
              </tbody>
            </Grid>
          </TableClip>
          <VScroll>
            <ScrollButton aria-label="Scroll up"><Triangle dir="up" /></ScrollButton>
            <VTrack><VThumb /></VTrack>
            <ScrollButton aria-label="Scroll down"><Triangle /></ScrollButton>
          </VScroll>
          <Callout $x={800} $y={1} $w={122} $h={603} />
          <Callout $x={1319} $y={43} $w={152} $h={101} />
        </SheetArea>
        <TabStrip>
          <TabArrows>
            <button aria-label="Previous sheet"><Triangle dir="left" color="#bbb" /></button>
            <button aria-label="Next sheet"><Triangle dir="right" color="#bbb" /></button>
          </TabArrows>
          <SheetTab>Flexmonster Pivot Table</SheetTab>
          <AddSheet aria-label="New sheet"><Svg w={13} h={13} stroke="#b4b4b4"><circle cx="6.500" cy="6.500" r="5.500" /><path d="M6.500 3.500v6M3.500 6.500h6" /></Svg></AddSheet>
          <HScroll>
            <Grip><DotsIcon /></Grip>
            <ScrollButton aria-label="Scroll left"><Triangle dir="left" /></ScrollButton>
            <HTrack><HThumb /></HTrack>
            <ScrollButton aria-label="Scroll right"><Triangle dir="right" /></ScrollButton>
          </HScroll>
        </TabStrip>
        <StatusBar>
          <span>Ready</span>
          <A11yStatus>
            <Svg w={12} h={12}><circle cx="5" cy="2" r="1.300" /><path d="M1 3.500l3 1.500v2l-2 4M9 3.500L6.500 5v2M5 8l-1 3M6 9l2 2 3.500-4" /></Svg>
            Accessibility: Good to go
          </A11yStatus>
          <ViewButtons>
            <ViewButton $on aria-label="Normal view"><Svg w={12} h={11}><rect x=".5" y=".5" width="10" height="9" /><path d="M4 0v10M7.500 0v10M0 3.500h11M0 6.500h11" /></Svg></ViewButton>
            <ViewButton aria-label="Page layout view"><Svg w={12} h={11}><rect x=".5" y=".5" width="11" height="9" /><path d="M3.500 2v6.500h5V2zM5 4.500h2M5 6.500h2" /></Svg></ViewButton>
            <ViewButton aria-label="Page break view"><Svg w={12} h={11}><rect x=".5" y=".5" width="11" height="9" /><path d="M4.500 0v5.500h4V0M0 5.500h4" /></Svg></ViewButton>
          </ViewButtons>
          <ZoomBar>
            <ZoomStep aria-label="Zoom out"><Svg w={7} h={7}><path d="M0 3.500h7" /></Svg></ZoomStep>
            <ZoomRange type="range" aria-label="Zoom" min="0" max="100" defaultValue="50" />
            <ZoomStep aria-label="Zoom in"><Svg w={7} h={7}><path d="M0 3.500h7M3.500 0v7" /></Svg></ZoomStep>
            <ZoomValue>100%</ZoomValue>
          </ZoomBar>
        </StatusBar>
        <Taskbar><TaskSearch /><TaskApp /></Taskbar>
      </AppWindow>
    </Frame>
  );
}
